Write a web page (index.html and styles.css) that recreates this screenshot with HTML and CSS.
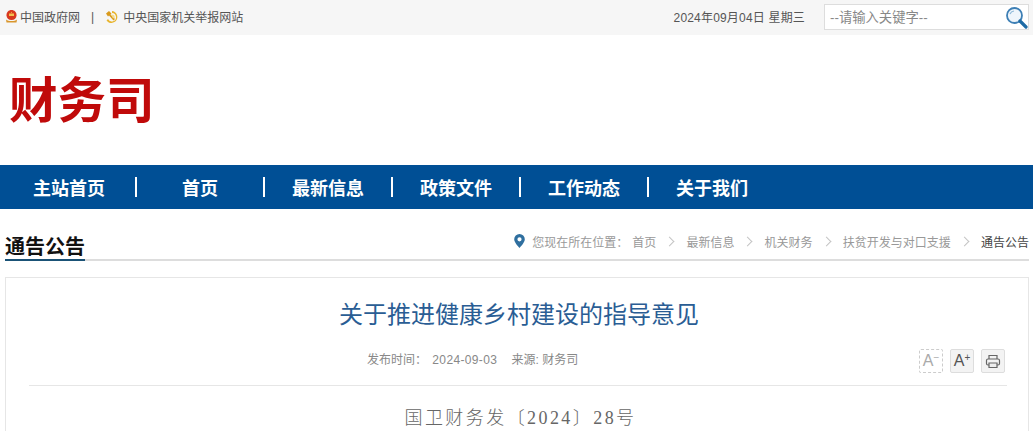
FILE: index.html
```html
<!DOCTYPE html>
<html lang="zh-CN">
<head>
    <meta charset="UTF-8">
    <meta name="viewport" content="width=device-width, initial-scale=1.0">
    <title>关于推进健康乡村建设的指导意见</title>
    <link rel="stylesheet" href="styles.css">
</head>
<body>
    <div class="topbar">
        <div class="top-links">
            <svg class="emblem" width="13" height="15" viewBox="0 0 13 15">
                <path d="M6.500 1C9.500 1 11.500 3.200 11.500 6.200S9.500 11 6.500 11 1.500 9.200 1.500 6.200 3.500 1 6.500 1z" fill="#d8381e"/>
                <path d="M4 4.500h5v2.500H4z" fill="#f2c14e"/>
                <path d="M6.500 2.500l.6 1.500h-1.200z" fill="#f2c14e"/>
                <path d="M1 10.500c1.500 1 3 1.500 5.500 1.500s4-.5 5.500-1.500l-.5 3h-10z" fill="#d9962c"/>
            </svg>
            <a class="top-link">中国政府网</a>
            <span class="top-sep">|</span>
            <svg class="emblem party" width="13" height="14" viewBox="0 0 13 14">
                <path d="M7 1A6 6 0 1 1 1.500 10.500L3 9A4.200 4.200 0 1 0 7 3z" fill="#e8b52f"/>
                <path d="M1 3.500L4 1l2.500 2.500-1 1L10 9l-1.500 1.500L4 5.500 3 6.500z" fill="#d99a1c"/>
                <path d="M6 4.500l3 .5 1 2.500-2 1z" fill="#f5dc8a"/>
            </svg>
            <a class="top-link">中央国家机关举报网站</a>
        </div>
        <div class="top-right">
            <span class="today">2024年09月04日 星期三</span>
            <div class="search">
                <span class="search-text">--请输入关键字--</span>
                <svg width="23" height="23" viewBox="0 0 23 23">
                    <circle cx="9.500" cy="9.500" r="7.500" fill="#eef5fb" stroke="#3d7fb5" stroke-width="1.800"/>
                    <path d="M5 8a5 5 0 0 1 4-3" fill="none" stroke="#8db8d8" stroke-width="1.200"/>
                    <path d="M15 15l6 6" stroke="#1d6aa5" stroke-width="3.200" stroke-linecap="round"/>
                </svg>
            </div>
        </div>
    </div>

    <div class="logo-row">
        <div class="logo">财务司</div>
    </div>

    <nav class="nav">
        <a class="nav-item first">主站首页</a><i class="nav-sep"></i>
        <a class="nav-item">首页</a><i class="nav-sep"></i>
        <a class="nav-item">最新信息</a><i class="nav-sep"></i>
        <a class="nav-item">政策文件</a><i class="nav-sep"></i>
        <a class="nav-item">工作动态</a><i class="nav-sep"></i>
        <a class="nav-item">关于我们</a>
    </nav>

    <div class="section-head">
        <h2 class="section-title">通告公告</h2>
        <div class="crumbs">
            <svg class="pin" width="11" height="14" viewBox="0 0 11 14">
                <path fill-rule="evenodd" d="M5.500 0A5.300 5.300 0 0 0 .2 5.300C.2 8.800 5.500 14 5.500 14s5.300-5.200 5.300-8.700A5.300 5.300 0 0 0 5.500 0zm0 3.200a2.100 2.100 0 1 1 0 4.200 2.100 2.100 0 0 1 0-4.200z" fill="#2f6f9f"/>
            </svg>
            <span class="crumb-label">您现在所在位置：</span>
            <a class="crumb">首页</a><span class="arrow"></span>
            <a class="crumb">最新信息</a><span class="arrow"></span>
            <a class="crumb">机关财务</a><span class="arrow"></span>
            <a class="crumb">扶贫开发与对口支援</a><span class="arrow"></span>
            <a class="crumb current">通告公告</a>
        </div>
    </div>

    <div class="article">
        <h1 class="article-title">关于推进健康乡村建设的指导意见</h1>
        <div class="meta-row">
            <div class="meta">
                <span class="meta-date">发布时间：&nbsp;<span class="digits">2024-09-03</span></span>
                <span>来源: 财务司</span>
            </div>
            <div class="tools">
                <span class="tool minus">A<sup>−</sup></span>
                <span class="tool">A<sup>+</sup></span>
                <span class="tool">
                    <svg width="16" height="15" viewBox="0 0 16 15" fill="none" stroke="#666" stroke-width="1.200">
                        <path d="M4 5V1.500h8V5"/>
                        <rect x="1.500" y="5" width="13" height="6" rx="1.500"/>
                        <path d="M4 9h8v4.500H4z" fill="#eee"/>
                    </svg>
                </span>
            </div>
        </div>
        <p class="doc-no">国卫财务发〔2024〕28号</p>
    </div>
</body>
</html>
```
FILE: styles.css
```css
html, body {
    margin: 0;
    padding: 0;
    height: 431px;
    overflow: hidden;
}
body {
    font-family: "Liberation Sans", "Noto Sans CJK SC", sans-serif;
    background-color: #fff;
    color: #333;
}
a {
    color: inherit;
    text-decoration: none;
}

.topbar {
    display: flex;
    justify-content: space-between;
    align-items: center;
    box-sizing: border-box;
    height: 35px;
    padding: 0 4px 2px 5px;
    background-color: #f6f6f6;
    font-size: 12px;
    color: #555;
}
.top-links,
.top-right {
    display: flex;
    align-items: center;
}
.top-link {
    margin-left: 2px;
}
.top-sep {
    margin: 0 11px 0 11px;
}
.party {
    margin-right: 3px;
}
.today {
    margin-right: 19px;
    letter-spacing: .18px;
}
.search {
    display: flex;
    justify-content: space-between;
    align-items: center;
    box-sizing: border-box;
    width: 205px;
    height: 26px;
    padding: 0 0 0 5px;
    background-color: #fff;
    border: 1px solid #ddd;
    font-size: 13.33px;
    color: #888;
}
.search svg {
    margin-top: 1px;
}

.logo-row {
    display: flex;
    align-items: center;
    height: 130px;
    padding-left: 9px;
}
.logo {
    font-size: 48.5px;
    font-weight: bold;
    line-height: 1;
    color: #c00a0a;
    margin-top: 3px;
}

.nav {
    display: flex;
    align-items: center;
    height: 44px;
    background-color: #004f95;
    color: #fff;
    font-size: 18px;
    font-weight: bold;
}
.nav-item {
    width: 126px;
    text-align: center;
}
.nav-item.first {
    box-sizing: border-box;
    width: 135px;
    padding-left: 3px;
}
.nav-sep {
    width: 2px;
    height: 20px;
    background-color: #fff;
}

.section-head {
    display: flex;
    justify-content: space-between;
    align-items: flex-end;
    box-sizing: border-box;
    height: 52px;
    margin: 0 4px 0 5px;
    border-bottom: 2px solid #ddd;
}
.section-title {
    margin: 0 0 -2px;
    font-size: 20px;
    line-height: 24px;
    color: #111;
    border-bottom: 2px solid #1a5276;
}
.crumbs {
    display: flex;
    align-items: center;
    height: 36px;
    margin-bottom: 0;
    font-size: 12px;
    color: #999;
}
.pin {
    margin-right: 7px;
    margin-top: -1px;
}
.crumb-label {
    margin-right: 4px;
}
.arrow {
    width: 6px;
    height: 6px;
    margin: 0 13.2px 0 10px;
    border-top: 1px solid #c4c4c4;
    border-right: 1px solid #c4c4c4;
    transform: rotate(45deg);
}
.current {
    color: #444;
}

.article {
    box-sizing: border-box;
    height: 154px;
    margin: 16px 4px 0 5px;
    padding: 0 21px 0 23px;
    border: 1px solid #e6e6e6;
    border-bottom: 0;
}
.article-title {
    margin: 21px 0 0;
    padding-left: 2px;
    font-size: 24px;
    font-weight: normal;
    line-height: 32px;
    text-align: center;
    color: #2a5d94;
}
.meta-row {
    display: flex;
    justify-content: space-between;
    align-items: center;
    height: 54px;
    padding: 0 2px 0 338px;
    border-bottom: 1px solid #e6e6e6;
    font-size: 12px;
    color: #888;
}
.digits {
    margin-left: 2px;
    letter-spacing: .35px;
}
.meta-date {
    margin-right: 11px;
}
.tools {
    display: flex;
    gap: 7px;
    margin-top: 6px;
}
.tool {
    display: flex;
    justify-content: center;
    align-items: center;
    box-sizing: border-box;
    width: 24px;
    height: 24px;
    background-color: #f3f3f3;
    border: 1px solid #ddd;
    border-radius: 2px;
    font-size: 16px;
    color: #555;
}
.tool sup {
    font-size: 10px;
    line-height: 1;
    margin-top: -6px;
}
.tool.minus {
    background-color: #fff;
    border: 1px dashed #ccc;
    color: #aaa;
}
.doc-no {
    margin: 20px 0 0;
    padding-left: 5px;
    font-family: "Liberation Serif", "Noto Sans CJK SC", serif;
    font-size: 18px;
    font-weight: 300;
    line-height: 24px;
    letter-spacing: 2.43px;
    text-align: center;
    color: #666;
}
```
